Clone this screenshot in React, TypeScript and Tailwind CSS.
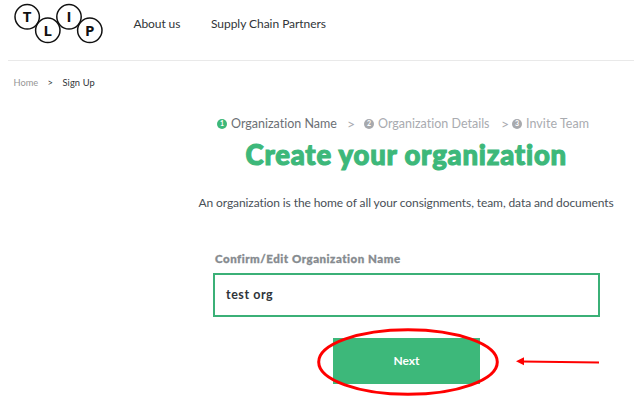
const logoLetters = [
  { letter: "T", x: 27.2, y: 16.8 },
  { letter: "L", x: 47.8, y: 30.3 },
  { letter: "I", x: 69, y: 16.8 },
  { letter: "P", x: 89.8, y: 30.3 },
];

function Logo() {
  return (
    <svg className="h-[60px] w-[133.5px] shrink-0" viewBox="0 0 133.5 60" aria-label="TLIP">
      {logoLetters.map(({ letter, x, y }) => (
        <g key={letter}>
          <circle cx={x} cy={y} r="12.2" fill="none" stroke="#111" strokeWidth="1.5" />
          <text x={x} y={y + 5.4} textAnchor="middle" fill="#111" className="font-['Open_Sans',sans-serif] text-[15px] font-bold">
            {letter}
          </text>
        </g>
      ))}
    </svg>
  );
}

function StepDot({ n, active }: { n: number; active?: boolean }) {
  return (
    <span
      className={`mb-px flex size-[10px] shrink-0 items-center justify-center rounded-full text-[7px] leading-none font-bold text-white ${active ? "bg-[#3db87a]" : "bg-[#a7a9ad]"}`}
    >
      {n}
    </span>
  );
}

export default function App() {
  return (
    <div className="relative h-[411px] w-[634px] overflow-hidden bg-white font-['Lato','Noto_Sans',sans-serif] whitespace-nowrap [font-variant-ligatures:none]">
      <header className="flex h-[60px]">
        <Logo />
        <nav className="flex pt-4 text-[12px] leading-4 text-[#303438]">
          <a className="w-[77.5px] tracking-[-0.1px]">About us</a>
          <a className="tracking-[-0.04px]">Supply Chain Partners</a>
        </nav>
      </header>
      <div className="ml-2 h-px bg-[#e9e9e9]" />
      <nav className="flex h-[54px] pt-[15px] pl-[13.5px] text-[9.3px] leading-[14px] text-[#303438]">
        <a className="w-[34px] text-[#969696]">Home</a>
        <span className="w-[15px]">&gt;</span>
        <span className="tracking-[0.1px]">Sign Up</span>
      </nav>
      <main>
        <ol className="flex h-[18px] items-center pl-[217px] text-[12.5px] leading-4 text-[#a9abb0]">
          <li className="flex w-[130px] items-center gap-1 text-[#6c7075]">
            <StepDot n={1} active />
            <span>Organization Name</span>
          </li>
          <li className="w-[17px] text-[14px]">&gt;</li>
          <li className="flex w-[137px] items-center gap-1">
            <StepDot n={2} />
            <span>Organization Details</span>
          </li>
          <li className="w-[11px] text-[14px]">&gt;</li>
          <li className="flex items-center gap-1">
            <StepDot n={3} />
            <span className="tracking-[0.05px]">Invite Team</span>
          </li>
        </ol>
        <h1 className="mt-0.5 ml-[245.5px] h-10 text-[27.5px] leading-10 font-black tracking-[0.78px] text-[#3db87a] [-webkit-text-stroke:1.1px_#3db87a]">
          Create your organization
        </h1>
        <p className="mt-5 ml-[198.5px] h-4 text-[12px] leading-4 tracking-[-0.09px] text-[#495057]">
          An organization is the home of all your consignments, team, data and documents
        </p>
        <label className="mt-10 ml-[215px] block h-4 text-[11.5px] leading-4 font-black tracking-[0.52px] text-[#868b8f] [-webkit-text-stroke:0.3px_#868b8f]">
          Confirm/Edit Organization Name
        </label>
        <div className="mt-[6px] ml-[213px] flex h-11 w-[387px] items-center border-2 border-[#3bb077] pl-[11px] text-[12.5px] font-bold tracking-[0.55px] text-[#2e343a]">
          <span>test org</span>
        </div>
        <button className="mt-[21px] ml-[333px] flex h-[46px] w-[147px] items-center justify-center bg-[#3db87a] text-[12px] font-bold text-white">
          Next
        </button>
      </main>
      <svg className="pointer-events-none absolute inset-0" width="634" height="411" viewBox="0 0 634 411" aria-hidden="true">
        <ellipse cx="408" cy="362" rx="89.3" ry="32.3" fill="none" stroke="#f00" strokeWidth="3" />
        <path d="M522 361.5 599 362.5" stroke="#f00" strokeWidth="2" />
        <path d="m516 361.3 8-4v8z" fill="#f00" />
      </svg>
    </div>
  );
}
